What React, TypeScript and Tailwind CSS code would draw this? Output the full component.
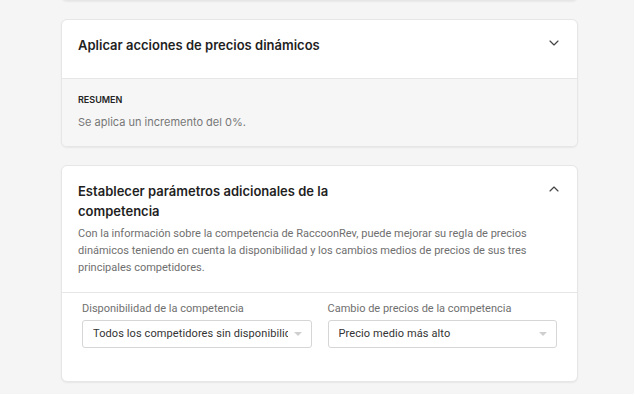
import React from 'react';
import { ChevronDown, ChevronUp } from 'lucide-react';

function SelectBox({ value }: { value: string }) {
  return (
    <div className="flex h-[28px] items-center rounded-[3px] border border-[#d6d6d6] bg-white pl-[10px] pr-[9px]">
      <span className="flex-1 overflow-hidden whitespace-nowrap text-[11px] tracking-[0.1px] text-[#333]">{value}</span>
      <span className="ml-[6px] h-0 w-0 border-x-[4px] border-t-[4px] border-x-transparent border-t-[#cfcfcf]" />
    </div>
  );
}

export default function App() {
  return (
    <div className="min-h-screen bg-[#f5f5f5] font-['Inter',sans-serif]">
      <div className="ml-[61px] flex w-[517px] flex-col gap-[18px]">
        {/* previous card, only its bottom edge shows */}
        <div className="-mt-[40px] h-[41px] rounded-md border border-[#e6e6e6] bg-white shadow-[0_1px_2px_rgba(0,0,0,0.06)]" />

        {/* Aplicar acciones */}
        <div className="overflow-hidden rounded-md border border-[#e6e6e6] bg-white shadow-[0_1px_2px_rgba(0,0,0,0.06)]">
          <div className="flex items-start justify-between px-[16px] pt-[15px] pb-[23px]">
            <h2 className="text-[13px] font-semibold leading-[20px] text-[#1f1f1f]">
              Aplicar acciones de precios dinámicos
            </h2>
            <ChevronDown className="mt-[0px] mr-[-1px] h-[16px] w-[16px] text-[#444]" strokeWidth={1.75} />
          </div>
          <div className="border-t border-[#e6e6e6] bg-[#f6f6f6] px-[16px] pt-[15px] pb-[16px]">
            <div className="text-[9px] font-semibold uppercase leading-[12px] text-[#222]">Resumen</div>
            <p className="mt-[8px] text-[11px] leading-[16px] text-[#777]">Se aplica un incremento del 0%.</p>
          </div>
        </div>

        {/* Parámetros de la competencia */}
        <div className="rounded-md border border-[#e6e6e6] bg-white shadow-[0_1px_2px_rgba(0,0,0,0.06)]">
          <div className="px-[16px] pt-[15px] pb-[16px]">
            <div className="flex items-start justify-between">
              <h2 className="w-[280px] text-[13px] font-semibold leading-[20px] text-[#1f1f1f]">
                Establecer parámetros adicionales de la competencia
              </h2>
              <ChevronUp className="mt-[0px] mr-[-1px] h-[16px] w-[16px] text-[#444]" strokeWidth={1.75} />
            </div>
            <p className="mt-[4px] font-['Roboto',sans-serif] text-[11px] leading-[17px] text-[#6f6f6f]">
              Con la información sobre la competencia de RaccoonRev, puede mejorar su regla de precios dinámicos
              teniendo en cuenta la disponibilidad y los cambios medios de precios de sus tres principales competidores.
            </p>
          </div>
          <div className="grid grid-cols-2 gap-[16px] border-t border-[#e6e6e6] px-[20px] pt-[8px] pb-[33px] font-['Roboto',sans-serif]">
            <div>
              <div className="mb-[3px] text-[11px] leading-[16px] text-[#6f6f6f]">Disponibilidad de la competencia</div>
              <SelectBox value="Todos los competidores sin disponibilidad" />
            </div>
            <div>
              <div className="mb-[3px] text-[11px] leading-[16px] text-[#6f6f6f]">Cambio de precios de la competencia</div>
              <SelectBox value="Precio medio más alto" />
            </div>
          </div>
        </div>
      </div>
    </div>
  );
}
